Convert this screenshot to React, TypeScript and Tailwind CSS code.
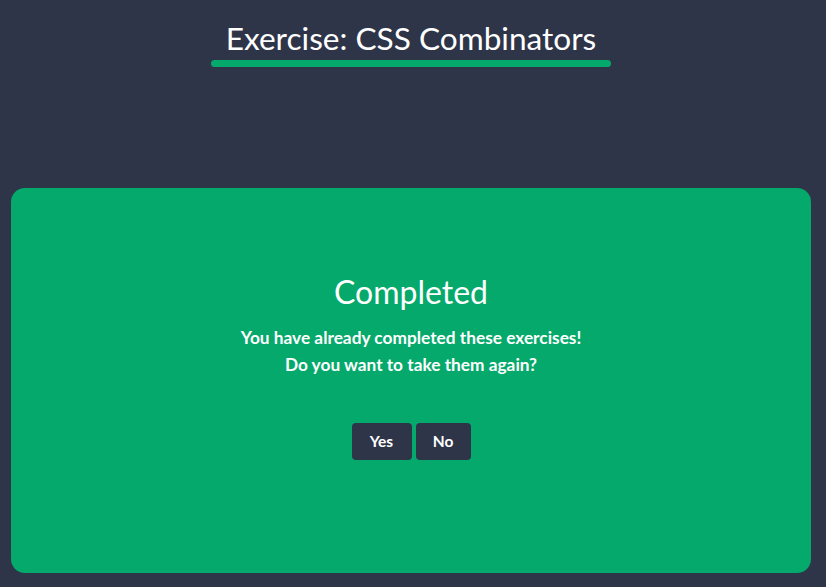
export default function App() {
  return (
    <div
      className="min-h-[587px] w-[826px] bg-[#2e3548] text-white"
      style={{ fontFamily: "Lato, 'Noto Sans', sans-serif" }}
    >
      <div className="w-[822px]">
        {/* Header */}
        <div className="flex flex-col items-center pt-[18px]">
          <h1 className="text-[31.6px] leading-[40px] font-normal">
            Exercise: CSS Combinators
          </h1>
          <div className="mt-[2px] h-[7px] w-[400px] rounded-full bg-[#04a96b]" />
        </div>

        {/* Card */}
        <div className="mx-[11px] mt-[121px] flex h-[385px] flex-col items-center rounded-[14px] bg-[#04a96b] pt-[84px]">
          <h2 className="text-[32px] leading-[40px] font-normal">Completed</h2>
          <p className="mt-[12px] text-center text-[17.3px] leading-[27px] font-bold">
            You have already completed these exercises!
            <br />
            Do you want to take them again?
          </p>
          <div className="mt-[45px] flex gap-[4px]">
            <button className="h-[37px] w-[60px] rounded-[4px] bg-[#2e3548] text-[15.5px] font-bold">
              Yes
            </button>
            <button className="h-[37px] w-[55px] rounded-[4px] bg-[#2e3548] text-[15.5px] font-bold">
              No
            </button>
          </div>
        </div>
      </div>
    </div>
  );
}
